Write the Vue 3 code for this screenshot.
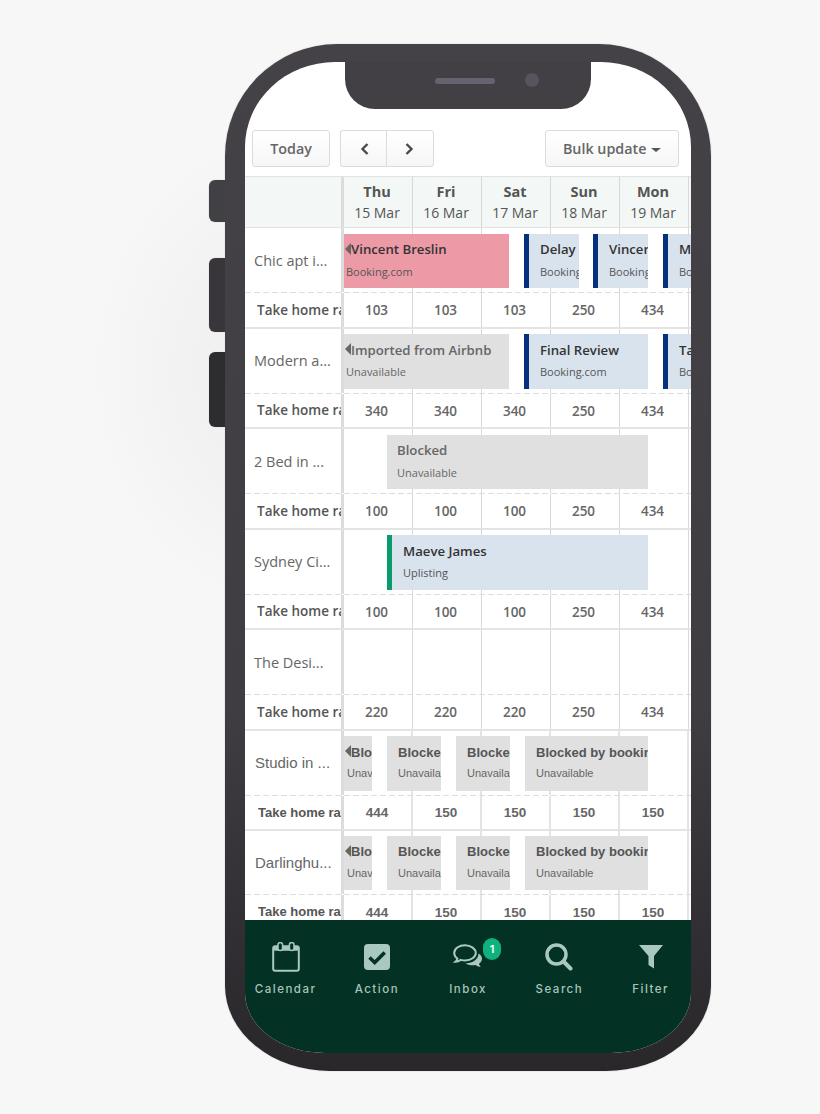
<script setup>
const days = [
  { name: 'Thu', date: '15 Mar' },
  { name: 'Fri', date: '16 Mar' },
  { name: 'Sat', date: '17 Mar' },
  { name: 'Sun', date: '18 Mar' },
  { name: 'Mon', date: '19 Mar' },
  { name: '', date: '' },
]

const blocked = (left, width, title, extra = {}) => ({ left, width, title, sub: 'Unavailable', type: 'grey', ...extra })

const rows = [
  {
    name: 'Chic apt i...',
    rates: [103, 103, 103, 250, 434],
    bookings: [
      { left: 0, width: 165, title: 'Vincent Breslin', sub: 'Booking.com', type: 'pink', cont: true },
      { left: 180, width: 55, title: 'Delay', sub: 'Booking.com', type: 'blue', bar: 'navy' },
      { left: 249, width: 55, title: 'Vincent', sub: 'Booking.com', type: 'blue', bar: 'navy' },
      { left: 319, width: 60, title: 'Mark', sub: 'Booking.com', type: 'blue', bar: 'navy' },
    ],
  },
  {
    name: 'Modern a...',
    rates: [340, 340, 340, 250, 434],
    bookings: [
      blocked(0, 165, 'Imported from Airbnb', { cont: true }),
      { left: 180, width: 124, title: 'Final Review', sub: 'Booking.com', type: 'blue', bar: 'navy' },
      { left: 319, width: 60, title: 'Tara', sub: 'Booking.com', type: 'blue', bar: 'navy' },
    ],
  },
  {
    name: '2 Bed in ...',
    rates: [100, 100, 100, 250, 434],
    bookings: [blocked(43, 261, 'Blocked')],
  },
  {
    name: 'Sydney Ci...',
    rates: [100, 100, 100, 250, 434],
    bookings: [{ left: 43, width: 261, title: 'Maeve James', sub: 'Uplisting', type: 'blue', bar: 'green' }],
  },
  { name: 'The Desi...', rates: [220, 220, 220, 250, 434], bookings: [] },
  {
    name: 'Studio in ...',
    arial: true,
    rates: [444, 150, 150, 150, 150],
    bookings: [
      blocked(0, 28, 'Blocked', { cont: true }),
      blocked(43, 54, 'Blocked'),
      blocked(112, 54, 'Blocked'),
      blocked(181, 123, 'Blocked by booking'),
    ],
  },
  {
    name: 'Darlinghu...',
    arial: true,
    rates: [444, 150, 150, 150, 150],
    bookings: [
      blocked(0, 28, 'Blocked', { cont: true }),
      blocked(43, 54, 'Blocked'),
      blocked(112, 54, 'Blocked'),
      blocked(181, 123, 'Blocked by booking'),
    ],
  },
]

const navItems = ['Calendar', 'Action', 'Inbox', 'Search', 'Filter']
</script>

<template>
  <div class="stage">
    <div class="glow"></div>
    <div class="phone">
      <span class="sideBtn sideBtnOne"></span>
      <span class="sideBtn sideBtnTwo"></span>
      <span class="sideBtn sideBtnThree"></span>
      <div class="screen">
        <div class="notch">
          <span class="speaker"></span>
          <span class="camera"></span>
        </div>

        <div class="toolbar">
          <button class="btn todayBtn">Today</button>
          <div class="btnGroup">
            <button class="btn arrowBtn">
              <svg width="12" height="14" viewBox="0 0 12 14"><path d="M8.5 2 3.5 7l5 5" fill="none" stroke="#4a4a4a" stroke-width="2.4" /></svg>
            </button>
            <button class="btn arrowBtn">
              <svg width="12" height="14" viewBox="0 0 12 14"><path d="M3.5 2l5 5-5 5" fill="none" stroke="#4a4a4a" stroke-width="2.4" /></svg>
            </button>
          </div>
          <button class="btn bulkBtn">Bulk update <i class="caret"></i></button>
        </div>

        <div class="table">
          <div class="headRow">
            <div class="nameCell headName"></div>
            <div v-for="day in days" :key="day.date" class="dayCell">
              <b>{{ day.name }}</b>
              <span>{{ day.date }}</span>
            </div>
          </div>

          <div v-for="row in rows" :key="row.name" class="row" :class="{ arialRow: row.arial }">
            <div class="bookingRow">
              <div class="nameCell listing">{{ row.name }}</div>
              <div class="cells">
                <span v-for="n in 6" :key="n" class="cell"></span>
                <div
                  v-for="b in row.bookings"
                  :key="b.left"
                  class="booking"
                  :class="[b.type, b.bar ? 'bar-' + b.bar : '', { cont: b.cont }]"
                  :style="{ left: b.left + 'px', width: b.width + 'px' }"
                >
                  <i v-if="b.cont" class="contArrow"></i>
                  <strong>{{ b.title }}</strong>
                  <small>{{ b.sub }}</small>
                </div>
              </div>
            </div>
            <div class="rateRow">
              <div class="nameCell rateName"><span>Take home rate</span></div>
              <div class="cells">
                <span v-for="(rate, i) in row.rates" :key="i" class="cell rate">{{ rate }}</span>
                <span class="cell"></span>
              </div>
            </div>
          </div>
        </div>

        <nav class="bottomNav">
          <div v-for="(item, i) in navItems" :key="item" class="navItem">
            <div class="navIcon">
              <svg v-if="i === 0" width="28" height="30" viewBox="0 0 28 30">
                <rect x="1.2" y="4.2" width="25.6" height="24.6" rx="2" fill="none" stroke="#a9c9c0" stroke-width="2" />
                <rect x="1.2" y="4.2" width="25.6" height="4.6" rx="2" fill="#a9c9c0" />
                <rect x="6" y="0.5" width="4.6" height="8" rx="2.3" fill="#033224" stroke="#a9c9c0" stroke-width="1.5" />
                <rect x="17.4" y="0.5" width="4.6" height="8" rx="2.3" fill="#033224" stroke="#a9c9c0" stroke-width="1.5" />
              </svg>
              <svg v-else-if="i === 1" width="26" height="26" viewBox="0 0 26 26">
                <rect width="26" height="26" rx="4" fill="#a9c9c0" />
                <path d="M5.5 13.5l5.2 5 10-10" fill="none" stroke="#033224" stroke-width="3.6" />
              </svg>
              <svg v-else-if="i === 2" width="30" height="26" viewBox="0 0 30 26">
                <path d="M12 1.2C6 1.2 1.2 4.7 1.2 9c0 2.2 1.2 4.1 3.2 5.6-.3 1.3-1 2.4-2 3.2 2 0 4-.8 5.4-1.9 1.3.4 2.7.6 4.2.6 6 0 10.8-3.5 10.8-7.5S18 1.2 12 1.2z" fill="none" stroke="#a9c9c0" stroke-width="2" />
                <path d="M25.5 9.5c2.2 1.4 3.5 3.2 3.5 5.2 0 2-1.2 3.8-3 5 .3 1.3 1 2.5 2 3.3-2.1 0-4-.8-5.3-2-3.4.8-7.6.2-10-1.7 6.8.2 12.8-4 12.8-9.8z" fill="#a9c9c0" />
              </svg>
              <svg v-else-if="i === 3" width="28" height="28" viewBox="0 0 28 28">
                <circle cx="11.5" cy="11.5" r="9.5" fill="none" stroke="#a9c9c0" stroke-width="3.5" />
                <path d="M18.5 18.5l7 7" stroke="#a9c9c0" stroke-width="4" stroke-linecap="round" />
              </svg>
              <svg v-else width="24" height="24" viewBox="0 0 24 24">
                <path d="M0 0h24L15 11v12.5L9.5 20V11z" fill="#a9c9c0" />
              </svg>
              <span v-if="i === 2" class="badge">1</span>
            </div>
            <span class="navLabel">{{ item }}</span>
          </div>
        </nav>
      </div>
    </div>
  </div>
</template>

<style>
html,
body {
  margin: 0;
  background: #f7f7f7;
}
</style>

<style scoped>
.stage {
  position: relative;
  width: 820px;
  height: 1114px;
  padding: 44px 0 0 225px;
  box-sizing: border-box;
  overflow: hidden;
  background: #f7f7f7;
  font-family: 'Open Sans', sans-serif;
}

.glow {
  position: absolute;
  left: 90px;
  top: 130px;
  width: 400px;
  height: 480px;
  background: radial-gradient(closest-side, #eeeeee 0%, #f2f2f2 55%, #f7f7f7 100%);
}

.phone {
  position: relative;
  width: 486px;
  height: 1027px;
  padding: 18px 20px;
  box-sizing: border-box;
  border-radius: 112px 112px 105px 105px / 112px 112px 85px 85px;
  background: linear-gradient(180deg, #444247 0%, #3f3d42 65%, #302e32 88%, #29272a 100%);
  box-shadow: 0 0 0 1px #ebebeb;
}

.sideBtn {
  position: absolute;
  left: -16px;
  width: 16px;
  border-radius: 6px 0 0 6px;
  box-shadow: -1px 0 0 #ebebeb, 0 1px 0 #ebebeb, 0 -1px 0 #ebebeb;
}

.sideBtnOne {
  top: 136px;
  height: 42px;
  background: #414044;
}

.sideBtnTwo {
  top: 214px;
  height: 74px;
  background: #38363a;
}

.sideBtnThree {
  top: 308px;
  height: 75px;
  background: #2d2c2e;
}

.screen {
  position: relative;
  display: flex;
  flex-direction: column;
  height: 991px;
  overflow: hidden;
  border-radius: 90px 90px 80px 80px / 85px 85px 60px 60px;
  background: #fff;
}

.notch {
  position: absolute;
  top: 0;
  left: 100px;
  width: 246px;
  height: 47px;
  border-radius: 0 0 30px 30px;
  background: #424045;
}

.speaker {
  position: absolute;
  left: 90px;
  top: 16px;
  width: 60px;
  height: 6px;
  border-radius: 3px;
  background: #64636f;
}

.camera {
  position: absolute;
  left: 180px;
  top: 11px;
  width: 14px;
  height: 14px;
  border-radius: 50%;
  background: #55545f;
}

.toolbar {
  display: flex;
  flex: none;
  height: 114px;
  padding: 68px 12px 0 7px;
  box-sizing: border-box;
}

.btn {
  height: 37px;
  padding: 0;
  border: 1px solid #dcdcdc;
  border-radius: 3px;
  background: linear-gradient(180deg, #fff, #f6f6f6);
  color: #666;
  font-family: 'Open Sans', sans-serif;
  font-size: 14.3px;
  font-weight: 600;
}

.todayBtn {
  width: 78px;
}

.btnGroup {
  display: flex;
  margin-left: 10px;
}

.arrowBtn {
  display: flex;
  align-items: center;
  justify-content: center;
}

.arrowBtn:first-child {
  width: 46px;
  padding-left: 3px;
  border-right: none;
  border-radius: 3px 0 0 3px;
}

.arrowBtn:last-child {
  width: 48px;
  padding-right: 3px;
  border-radius: 0 3px 3px 0;
}

.bulkBtn {
  width: 134px;
  margin-left: auto;
}

.caret {
  display: inline-block;
  margin-left: 1px;
  vertical-align: middle;
  border-top: 4px solid #555;
  border-left: 5px solid transparent;
  border-right: 5px solid transparent;
}

.table {
  flex: 1;
  min-height: 0;
  overflow: hidden;
}

.headRow {
  display: flex;
  height: 52px;
  box-sizing: border-box;
  border-top: 1px solid #e2e2e2;
  border-bottom: 1px solid #e2e2e2;
  background: #f3f8f6;
}

.nameCell {
  flex: none;
  width: 99px;
  box-sizing: border-box;
  border-right: 3px solid #dcdcdc;
}

.dayCell {
  display: flex;
  flex: none;
  flex-direction: column;
  align-items: center;
  justify-content: center;
  width: 69px;
  padding-right: 2px;
  box-sizing: border-box;
  border-right: 1px solid #d8d8d8;
  color: #555;
  font-size: 14px;
  line-height: 21px;
}

.dayCell b {
  font-size: 14.5px;
  font-weight: 700;
}

.row {
  height: 100.5px;
}

.arialRow {
  height: 99.5px;
}

/* dashes are longer than a css dashed border gives */
.bookingRow {
  display: flex;
  height: 65px;
  box-sizing: border-box;
  padding-bottom: 1px;
  background: repeating-linear-gradient(90deg, #dcdcdc 0 6px, transparent 6px 9px) bottom / 100% 1px no-repeat;
}

.rateRow {
  display: flex;
  height: 35.5px;
  box-sizing: border-box;
  border-bottom: 2px solid #e4e4e4;
}

.listing {
  display: flex;
  align-items: center;
  padding-left: 9px;
  color: #666;
  font-size: 14.5px;
}

.rateName {
  display: flex;
  align-items: center;
  overflow: hidden;
  padding-left: 12px;
  color: #555;
  font-size: 13.5px;
  font-weight: 600;
  white-space: nowrap;
}

.rateName span {
  display: block;
  width: 84px;
  overflow: hidden;
}

.cells {
  position: relative;
  display: flex;
  flex: none;
}

.cell {
  display: flex;
  flex: none;
  align-items: center;
  justify-content: center;
  width: 69px;
  box-sizing: border-box;
  border-right: 1px solid #d8d8d8;
}

.rate {
  padding: 1px 3px 0 0;
  color: #666;
  font-size: 13.5px;
  font-weight: 600;
}

.booking {
  position: absolute;
  top: 5.5px;
  height: 54.5px;
  padding: 6.5px 0 0 10px;
  box-sizing: border-box;
  overflow: hidden;
  white-space: nowrap;
}

.booking strong,
.booking small {
  display: block;
}

.booking strong {
  color: #333;
  font-size: 13.2px;
  font-weight: 600;
  line-height: 19px;
}

.booking small {
  margin-top: 4.5px;
  color: #555;
  font-size: 11px;
  line-height: 15px;
}

.pink {
  background: #ec9aa6;
}

.blue {
  background: #d9e3ee;
}

.grey {
  background: #e0e0e0;
}

.grey strong,
.grey small {
  color: #666;
}

.bar-navy,
.bar-green {
  padding-left: 11px;
  border-left: 5px solid #04307c;
}

.bar-green {
  border-left-color: #0a9a6c;
}

.cont {
  padding-left: 2px;
}

.cont strong {
  padding-left: 5px;
}

.contArrow {
  position: absolute;
  left: 1px;
  top: 9px;
  border-top: 6px solid transparent;
  border-bottom: 6px solid transparent;
  border-right: 6px solid #666;
}

.arialRow .listing,
.arialRow .rateName,
.arialRow .rate,
.arialRow .booking {
  font-family: 'Liberation Sans', sans-serif;
}

.arialRow .listing {
  padding-left: 10px;
  font-size: 15px;
}

.arialRow .rateName {
  padding-left: 13px;
  font-weight: 700;
  font-size: 13px;
}

.arialRow .rateName span {
  width: 83px;
}

.arialRow .rate {
  padding-right: 1px;
  font-weight: 700;
}

.arialRow .cell {
  border-right: 2px solid #e4e4e4;
}

.arialRow .booking {
  padding-left: 11px;
}

.arialRow .cont {
  padding-left: 3px;
}

.arialRow .cont strong {
  padding-left: 4px;
}

.arialRow .booking strong {
  color: #555;
  font-size: 13px;
  font-weight: 700;
}

.bottomNav {
  display: grid;
  flex: none;
  grid-template-columns: repeat(5, 91.25px);
  height: 133px;
  margin-left: -5px;
  padding: 22px 5px 0 0;
  box-sizing: border-box;
  background: #033224;
}

.navItem {
  display: flex;
  flex-direction: column;
  align-items: center;
}

.navIcon {
  position: relative;
  display: flex;
  align-items: center;
  justify-content: center;
  height: 30px;
}

.navLabel {
  margin-top: 10px;
  color: #a9c4bb;
  font-family: 'Inter', sans-serif;
  font-size: 11.5px;
  font-weight: 500;
  letter-spacing: 1.5px;
}

.badge {
  position: absolute;
  left: 30px;
  top: -4px;
  width: 18px;
  height: 22px;
  border-radius: 9px;
  background: #0fb27f;
  color: #fff;
  font-family: 'Inter', sans-serif;
  font-size: 11px;
  font-weight: 600;
  line-height: 22px;
  text-align: center;
}
</style>
